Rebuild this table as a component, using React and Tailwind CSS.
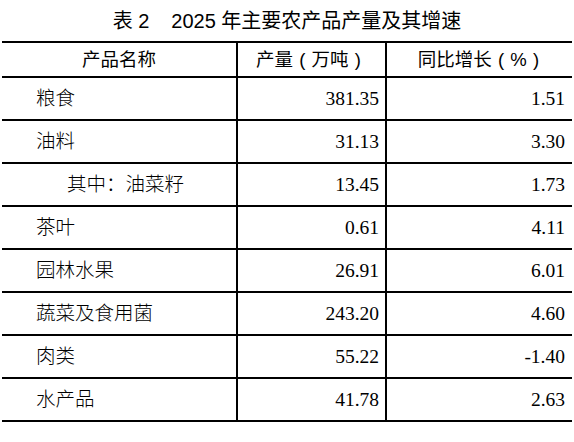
import React from 'react'

const rows = [
	{ name: '粮食', output: '381.35', growth: '1.51' },
	{ name: '油料', output: '31.13', growth: '3.30' },
	{ name: '其中：油菜籽', output: '13.45', growth: '1.73', sub: true },
	{ name: '茶叶', output: '0.61', growth: '4.11' },
	{ name: '园林水果', output: '26.91', growth: '6.01' },
	{ name: '蔬菜及食用菌', output: '243.20', growth: '4.60' },
	{ name: '肉类', output: '55.22', growth: '-1.40' },
	{ name: '水产品', output: '41.78', growth: '2.63' },
]

const sans = "font-['Liberation_Sans','Noto_Sans_CJK_SC',sans-serif]"
const serif = "font-['Liberation_Serif','Noto_Sans_CJK_SC',serif]"

// full-width bracket with the glyph centred in its em box
const Paren = ({ children }) => <span className="inline-block w-[1em] text-center">{children}</span>

export default function App() {
	return (
		<div className="w-[574px] h-[442px] bg-white text-black">
			<div className={`h-[41px] flex items-center justify-center text-[20px] ${sans}`}>
				<span>表 2</span>
				<span className="ml-[22px]">2025 年主要农产品产量及其增速</span>
			</div>
			<div className="mx-[2px] w-[570px] border-t-2 border-black">
				<div className={`grid grid-cols-[236px_149px_185px] h-[35px] border-b-2 border-black text-[18.5px] ${sans}`}>
					<div className="flex items-center justify-center border-r-2 border-black">产品名称</div>
					<div className="flex items-center justify-center border-r-2 border-black">
						产量<Paren>(</Paren>万吨<Paren>)</Paren>
					</div>
					<div className="flex items-center justify-center pl-1">
						同比增长<Paren>(</Paren>%<Paren>)</Paren>
					</div>
				</div>
				{rows.map((r) => (
					<div
						key={r.name}
						className={`grid grid-cols-[236px_149px_185px] h-[43px] border-b-2 border-black text-[19.5px] ${serif}`}
					>
						<div
							className={`flex items-center border-r-2 border-black font-light ${r.sub ? 'pl-[65px]' : 'pl-[34px]'}`}
						>
							{r.name}
						</div>
						<div className="flex items-center justify-end pr-[6px] border-r-2 border-black">{r.output}</div>
						<div className="flex items-center justify-end pr-[7px]">{r.growth}</div>
					</div>
				))}
			</div>
		</div>
	)
}
